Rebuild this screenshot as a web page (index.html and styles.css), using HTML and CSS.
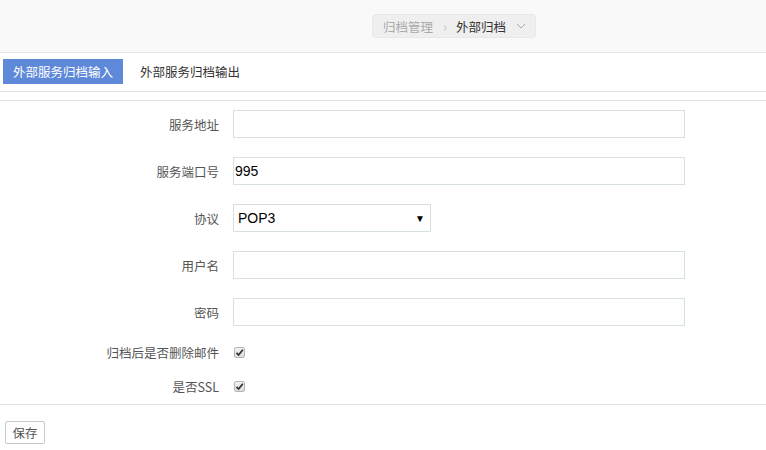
FILE: index.html
```html
<!DOCTYPE html>
<html>
<head>
<meta charset="utf-8">
<link rel="stylesheet" href="styles.css">
</head>
<body>
<div class="header">
  <div class="crumbs">
    <span class="crumb-parent">归档管理</span>
    <span class="crumb-sep">›</span>
    <span class="crumb-current">外部归档</span>
    <svg class="crumb-caret" width="10" height="6" viewBox="0 0 10 6"><path d="M1 1 L5 5 L9 1" fill="none" stroke="#aaa" stroke-width="1"/></svg>
  </div>
</div>
<div class="tabs">
  <div class="tab active">外部服务归档输入</div>
  <div class="tab">外部服务归档输出</div>
</div>
<div class="form">
  <div class="row">
    <label class="label">服务地址</label>
    <div class="input"></div>
  </div>
  <div class="row">
    <label class="label">服务端口号</label>
    <div class="input">995</div>
  </div>
  <div class="row">
    <label class="label">协议</label>
    <div class="select"><span>POP3</span><span class="arrow">▼</span></div>
  </div>
  <div class="row">
    <label class="label">用户名</label>
    <div class="input"></div>
  </div>
  <div class="row">
    <label class="label">密码</label>
    <div class="input"></div>
  </div>
  <div class="row check-row first-check">
    <label class="label">归档后是否删除邮件</label>
    <span class="check"><svg width="9" height="9" viewBox="0 0 9 9"><path d="M1.5 4.8 L3.6 7 L7.8 1.8" fill="none" stroke="#333" stroke-width="1.8"/></svg></span>
  </div>
  <div class="row check-row">
    <label class="label">是否SSL</label>
    <span class="check"><svg width="9" height="9" viewBox="0 0 9 9"><path d="M1.5 4.8 L3.6 7 L7.8 1.8" fill="none" stroke="#333" stroke-width="1.8"/></svg></span>
  </div>
</div>
<div class="actions">
  <button class="btn">保存</button>
</div>
</body>
</html>
```
FILE: styles.css
```css
* { box-sizing: border-box; }
body {
  margin: 0;
  font-family: "Noto Sans CJK SC", "Liberation Sans", sans-serif;
  font-size: 12.5px;
  color: #333;
  background: #fff;
}
.header {
  height: 53px;
  background: #f9f9f9;
  border-bottom: 1px solid #e6e6e6;
  padding: 14px 0 0 372px;
}
.crumbs {
  display: inline-flex;
  align-items: center;
  width: 164px;
  height: 24px;
  padding: 0 0 0 10px;
  background: #efefef;
  border: 1px solid #e8e8e8;
  border-radius: 4px;
}
.crumb-parent { color: #aaa; }
.crumb-sep { color: #c4c4c4; margin: 0 9px 0 10px; font-size: 13px; }
.crumb-current { color: #333; }
.crumb-caret { margin-left: 10px; }
.tabs {
  display: flex;
  gap: 7px;
  height: 39px;
  padding: 6px 0 0 3px;
  border-bottom: 1px solid #dde3e3;
}
.tab {
  height: 25px;
  line-height: 25px;
  padding: 0 10px;
  color: #333;
}
.tab.active {
  width: 120px;
  background: #5e89d8;
  color: #fff;
}
.form {
  margin-top: 8px;
  border-top: 1px solid #dde3e3;
  border-bottom: 1px solid #dde3e3;
  padding: 9px 0 8px;
}
.row {
  display: grid;
  grid-template-columns: 219px auto;
  column-gap: 14px;
  align-items: center;
  justify-items: start;
  margin-bottom: 19px;
}
.label {
  justify-self: end;
  color: #555;
}
.input {
  width: 452px;
  height: 28px;
  border: 1px solid #d7e0e0;
  padding: 0 0 0 1px;
  line-height: 26px;
  font-family: "Liberation Sans", Arial, sans-serif;
  font-size: 14px;
  color: #000;
}
.select {
  width: 198px;
  height: 28px;
  border: 1px solid #d7e0e0;
  display: flex;
  justify-content: space-between;
  align-items: center;
  padding: 0 5px 0 4px;
  font-family: "Liberation Sans", Arial, sans-serif;
  font-size: 14px;
  color: #000;
}
.arrow { font-size: 10px; }
.check-row { margin-bottom: 14px; height: 20px; }
.first-check { margin-top: -3px; }
.check-row:last-child { margin-bottom: 0; }
.check {
  width: 11px;
  height: 11px;
  margin-left: 1px;
  border: 1px solid #b5b5b5;
  border-radius: 2px;
  background: linear-gradient(#f2f2f2, #dcdcdc);
  display: flex;
  align-items: center;
  justify-content: center;
}
.actions {
  padding: 16px 0 0 5px;
}
.btn {
  width: 40px;
  height: 23px;
  padding: 0;
  background: #fff;
  border: 1px solid #c8c8c8;
  border-radius: 2px;
  font-family: "Noto Sans CJK SC", sans-serif;
  font-size: 12.5px;
  color: #555;
}
```
